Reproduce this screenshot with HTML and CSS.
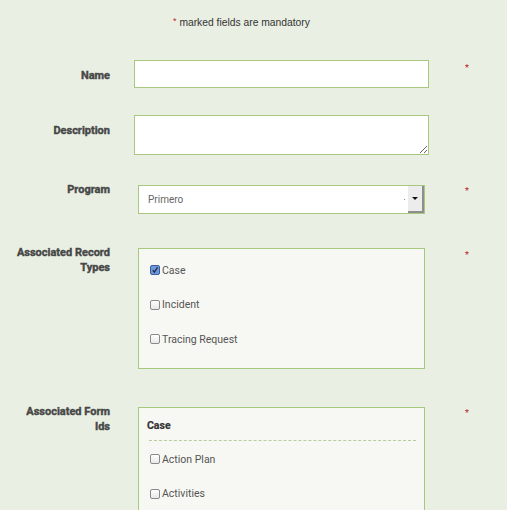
FILE: index.html
```html
<!DOCTYPE html>
<html>
<head>
<meta charset="utf-8">
<link rel="stylesheet" href="styles.css">
</head>
<body>
<div class="page">
  <p class="note"><span class="req">*</span> marked fields are mandatory</p>

  <div class="row row-name">
    <label class="lbl">Name</label>
    <div class="field"><input class="text-input" type="text"></div>
    <span class="star">*</span>
  </div>

  <div class="row row-desc">
    <label class="lbl">Description</label>
    <div class="field"><textarea class="text-area"></textarea></div>
    <span class="star"></span>
  </div>

  <div class="row row-prog">
    <label class="lbl">Program</label>
    <div class="field inset">
      <div class="select">
        <span class="select-val">Primero</span>
        <span class="select-dot"></span>
        <span class="select-btn"><span class="arrow"></span></span>
      </div>
    </div>
    <span class="star">*</span>
  </div>

  <div class="row row-types">
    <label class="lbl">Associated Record<br>Types</label>
    <div class="field inset">
      <div class="box box-types">
        <div class="check-item"><span class="cb checked"><svg viewBox="0 0 10 10" width="10" height="10"><path d="M2.2 5.2 L4.2 7.6 L8.2 1.6" fill="none" stroke="#1b2a44" stroke-width="1.6"/></svg></span><span>Case</span></div>
        <div class="check-item"><span class="cb"></span><span>Incident</span></div>
        <div class="check-item"><span class="cb"></span><span>Tracing Request</span></div>
      </div>
    </div>
    <span class="star">*</span>
  </div>

  <div class="row row-forms">
    <label class="lbl">Associated Form<br>Ids</label>
    <div class="field inset">
      <div class="box box-forms">
        <div class="group-title">Case</div>
        <div class="check-list">
          <div class="check-item"><span class="cb"></span><span>Action Plan</span></div>
          <div class="check-item"><span class="cb"></span><span>Activities</span></div>
        </div>
      </div>
    </div>
    <span class="star">*</span>
  </div>
</div>
</body>
</html>
```

FILE: styles.css
```css
html, body {
  margin: 0;
  padding: 0;
  background: #e9efe3;
  height: 100%;
  overflow: hidden;
}

.page {
  padding-top: 14px;
  font-family: Roboto, "Liberation Sans", sans-serif;
}

.note {
  margin: 0 0 0 173px;
  font-family: "Liberation Sans", Arial, sans-serif;
  font-size: 10.3px;
  line-height: 14px;
  color: #333;
}

.req {
  color: #c0272d;
  font-size: 9px;
  vertical-align: 2px;
}

.row {
  display: grid;
  grid-template-columns: 110px 295px 58px;
  column-gap: 24px;
  align-items: start;
}

.lbl {
  text-align: right;
  font-size: 11px;
  line-height: 15px;
  font-weight: 700;
  color: #474747;
  -webkit-text-stroke: 0.4px #474747;
}

.star {
  color: #b5232a;
  font-size: 9px;
  line-height: 9px;
  padding-left: 12px;
}

.row-name { margin-top: 30px; }
.row-name .lbl { padding-top: 8px; }
.row-name .star { padding-top: 4px; }

.row-desc { margin-top: 27px; }
.row-desc .lbl { padding-top: 8px; }

.row-prog { margin-top: 30px; }
.row-prog .lbl { margin-top: -3px; }
.row-prog .star { padding-top: 2px; }

.row-types { margin-top: 34px; }
.row-types .lbl { margin-top: -3px; }
.row-types .star { padding-top: 3px; }

.row-forms { margin-top: 38px; }
.row-forms .lbl { margin-top: -3px; }
.row-forms .star { padding-top: 2px; }

.field.inset {
  padding: 0 4px;
}

.text-input,
.text-area {
  display: block;
  box-sizing: border-box;
  width: 100%;
  margin: 0;
  border: 1px solid #a8c77f;
  background: #fff;
  outline: none;
  border-radius: 0;
}

.text-input { height: 28px; }
.text-area { height: 40px; resize: vertical; }

.select {
  box-sizing: border-box;
  height: 29px;
  border: 1px solid #a8c77f;
  background: #fff;
  display: flex;
  align-items: center;
}

.select-val {
  flex: 1;
  padding-left: 9px;
  font-size: 10px;
  color: #666;
}

.select-dot {
  width: 1px;
  height: 1px;
  background: #888;
  margin-right: 3px;
}

.select-btn {
  align-self: stretch;
  width: 14px;
  background: #ececec;
  border-right: 2px solid #8e8e8e;
  border-bottom: 2px solid #8e8e8e;
  display: flex;
  align-items: center;
  justify-content: center;
}

.arrow {
  width: 0;
  height: 0;
  border-left: 3px solid transparent;
  border-right: 3px solid transparent;
  border-top: 3px solid #111;
}

.box {
  box-sizing: border-box;
  border: 1px solid #a8c77f;
  background: #f7f8f3;
}

.box-types {
  height: 121px;
  padding: 14px 0 0 11px;
}

.box-forms {
  height: 120px;
  padding: 11px 8px 0 8px;
}

.group-title {
  font-size: 10.5px;
  font-weight: 700;
  color: #333;
  line-height: 14px;
  padding-bottom: 7px;
  border-bottom: 1px dashed #b9cc9f;
  margin-left: 2px;
  text-indent: -2px;
  -webkit-text-stroke: 0.2px #333;
}

.check-list {
  padding: 11px 0 0 3px;
}

.check-item {
  display: flex;
  align-items: center;
  gap: 2px;
  height: 14px;
  margin-bottom: 20.5px;
  font-size: 10.5px;
  color: #555;
}

.cb {
  box-sizing: border-box;
  width: 10px;
  height: 10px;
  border: 1px solid #8a8a8a;
  border-radius: 2px;
  background: linear-gradient(#fff, #e8e8e8);
  display: inline-flex;
  align-items: center;
  justify-content: center;
  overflow: hidden;
}

.cb.checked {
  background: #6e97d9;
  border-color: #3c5f9c;
}

.cb svg { display: block; }
```
